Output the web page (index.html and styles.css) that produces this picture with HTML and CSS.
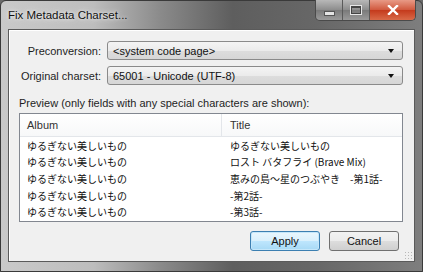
FILE: index.html
```html
<!DOCTYPE html>
<html lang="en">

<head>
    <meta charset="UTF-8">
    <title>Fix Metadata Charset...</title>
    <link rel="stylesheet" href="styles.css">
</head>

<body>
    <div class="window">
        <div class="titlebar">
            <div class="title">Fix Metadata Charset...</div>
            <div class="caption-buttons">
                <div class="cap-btn cap-min"><span class="min-glyph"></span></div>
                <div class="cap-btn cap-max"><span class="max-glyph"></span></div>
                <div class="cap-btn cap-close">
                    <svg width="12" height="10" viewBox="0 0 12 10">
                        <path d="M2 1 L10 9 M10 1 L2 9" stroke="#fff" stroke-width="2.4" stroke-linecap="square" />
                    </svg>
                </div>
            </div>
        </div>

        <div class="client">
            <div class="form-row">
                <label class="field-label">Preconversion:</label>
                <div class="combo">
                    <span>&lt;system code page&gt;</span>
                    <span class="combo-arrow"></span>
                </div>
            </div>
            <div class="form-row">
                <label class="field-label">Original charset:</label>
                <div class="combo">
                    <span>65001 - Unicode (UTF-8)</span>
                    <span class="combo-arrow"></span>
                </div>
            </div>

            <div class="preview-label">Preview (only fields with any special characters are shown):</div>

            <div class="list">
                <div class="list-head">
                    <div class="col-album">Album</div>
                    <div class="col-title">Title</div>
                </div>
                <div class="list-row">
                    <div class="col-album">ゆるぎない美しいもの</div>
                    <div class="col-title">ゆるぎない美しいもの</div>
                </div>
                <div class="list-row">
                    <div class="col-album">ゆるぎない美しいもの</div>
                    <div class="col-title">ロスト バタフライ (Brave Mix)</div>
                </div>
                <div class="list-row">
                    <div class="col-album">ゆるぎない美しいもの</div>
                    <div class="col-title">恵みの島～星のつぶやき　-第1話-</div>
                </div>
                <div class="list-row">
                    <div class="col-album">ゆるぎない美しいもの</div>
                    <div class="col-title">-第2話-</div>
                </div>
                <div class="list-row">
                    <div class="col-album">ゆるぎない美しいもの</div>
                    <div class="col-title">-第3話-</div>
                </div>
            </div>

            <div class="button-row">
                <div class="btn btn-default">Apply</div>
                <div class="btn">Cancel</div>
            </div>
            <div class="grip"></div>
        </div>
    </div>
</body>

</html>
```

FILE: styles.css
```css
body {
    margin: 0;
    padding: 0;
    font-family: 'Liberation Sans', Arial, sans-serif;
    font-size: 11px;
    background: #6a6a6a;
}

.window {
    width: 423px;
    height: 272px;
    box-sizing: border-box;
    padding: 0 7px 9px 7px;
    background: linear-gradient(90deg, #c9c9c9 0%, #bdbdbd 22%, #8a8a8a 38%, #5e5e5e 55%, #676767 75%, #7e7e7e 100%);
    border: 1px solid #3a3a3a;
    border-radius: 6px 6px 0 0;
    display: flex;
    flex-direction: column;
}

.titlebar {
    height: 28px;
    flex-shrink: 0;
    display: flex;
    justify-content: space-between;
    align-items: flex-start;
}

.title {
    margin-top: 8px;
    font-family: 'Liberation Sans', sans-serif;
    font-size: 11.5px;
    color: #111;
    text-shadow: 0 0 6px #e8e8e8, 0 0 3px #f2f2f2;
}

.caption-buttons {
    display: flex;
    margin-right: -1px;
    margin-top: -1px;
    border: 1px solid #4a4a4a;
    border-top: none;
    border-radius: 0 0 5px 5px;
    overflow: hidden;
    height: 20px;
}

.cap-btn {
    height: 20px;
    display: flex;
    align-items: center;
    justify-content: center;
    background: linear-gradient(#b8b8b8, #8c8c8c 50%, #7a7a7a 51%, #9a9a9a);
    border-right: 1px solid #5a5a5a;
}

.cap-min {
    width: 26px;
}

.cap-max {
    width: 26px;
}

.cap-close {
    width: 45px;
    border-right: none;
    background: linear-gradient(#e89a86, #d0583d 50%, #c43a1c 51%, #d96a48);
}

.min-glyph {
    width: 9px;
    height: 3px;
    margin-top: 6px;
    background: #e4e4e4;
    border: 1px solid #555;
}

.max-glyph {
    width: 8px;
    height: 5px;
    border: 1px solid #444;
    border-top-width: 2px;
    box-shadow: 0 0 0 1px #e6e6e6;
}

.client {
    flex: 1;
    background: #f0f0f0;
    border: 1px solid #5a5a5a;
    box-shadow: inset 1px 1px 0 #fff;
    padding: 11px 11px 0 10px;
    position: relative;
    display: flex;
    flex-direction: column;
}

.client > * {
    flex-shrink: 0;
}

.form-row {
    display: flex;
    align-items: center;
    gap: 6px;
    margin-bottom: 6px;
}

.field-label {
    width: 82px;
    text-align: right;
    color: #1e1e1e;
}

.combo {
    flex: 1;
    height: 19px;
    box-sizing: border-box;
    border: 1px solid #8a8a8a;
    border-radius: 3px;
    background: linear-gradient(#f4f4f4, #ebebeb 50%, #dddddd 51%, #d6d6d6);
    display: flex;
    align-items: center;
    justify-content: space-between;
    padding: 0 8px 0 5px;
    color: #111;
}

.combo-arrow {
    width: 0;
    height: 0;
    border-left: 3px solid transparent;
    border-right: 3px solid transparent;
    border-top: 4px solid #111;
}

.preview-label {
    height: 13px;
    margin-top: 6px;
    margin-bottom: 3px;
    color: #1e1e1e;
}

.list {
    height: 109px;
    box-sizing: border-box;
    border: 1px solid #828790;
    background: #fff;
}

.list-head {
    display: flex;
    height: 23px;
    box-sizing: border-box;
    align-items: center;
    background: linear-gradient(#ffffff, #f7f8f9);
    border-bottom: 1px solid #e3e6ea;
    color: #333;
}

.list-head .col-album {
    border-right: 1px solid #e3e6ea;
    height: 100%;
    display: flex;
    align-items: center;
}

.list-row {
    display: flex;
    height: 16.6px;
    align-items: center;
    font-family: 'Noto Sans CJK JP', 'Liberation Sans', sans-serif;
    font-size: 10px;
    color: #111;
}

.col-album {
    width: 202px;
    padding-left: 7px;
    box-sizing: border-box;
}

.col-title {
    padding-left: 8px;
}

.button-row {
    display: flex;
    justify-content: flex-end;
    gap: 9px;
    margin-top: 9px;
    padding-right: 4px;
}

.btn {
    width: 70px;
    height: 20px;
    box-sizing: border-box;
    border: 1px solid #707070;
    border-radius: 3px;
    background: linear-gradient(#f2f2f2, #ebebeb 50%, #dddddd 51%, #cfcfcf);
    display: flex;
    align-items: center;
    justify-content: center;
    color: #111;
}

.btn-default {
    border-color: #3c7fb1;
    background: linear-gradient(#eaf6fd, #d9f0fc 50%, #bee6fd 51%, #a7d9f5);
    box-shadow: inset 0 0 0 1px #c5e7fa;
}

.grip {
    position: absolute;
    right: 2px;
    bottom: 2px;
    width: 8px;
    height: 8px;
    background: radial-gradient(circle, #b8b8b8 1px, transparent 1px) 0 0 / 3px 3px;
}
```
